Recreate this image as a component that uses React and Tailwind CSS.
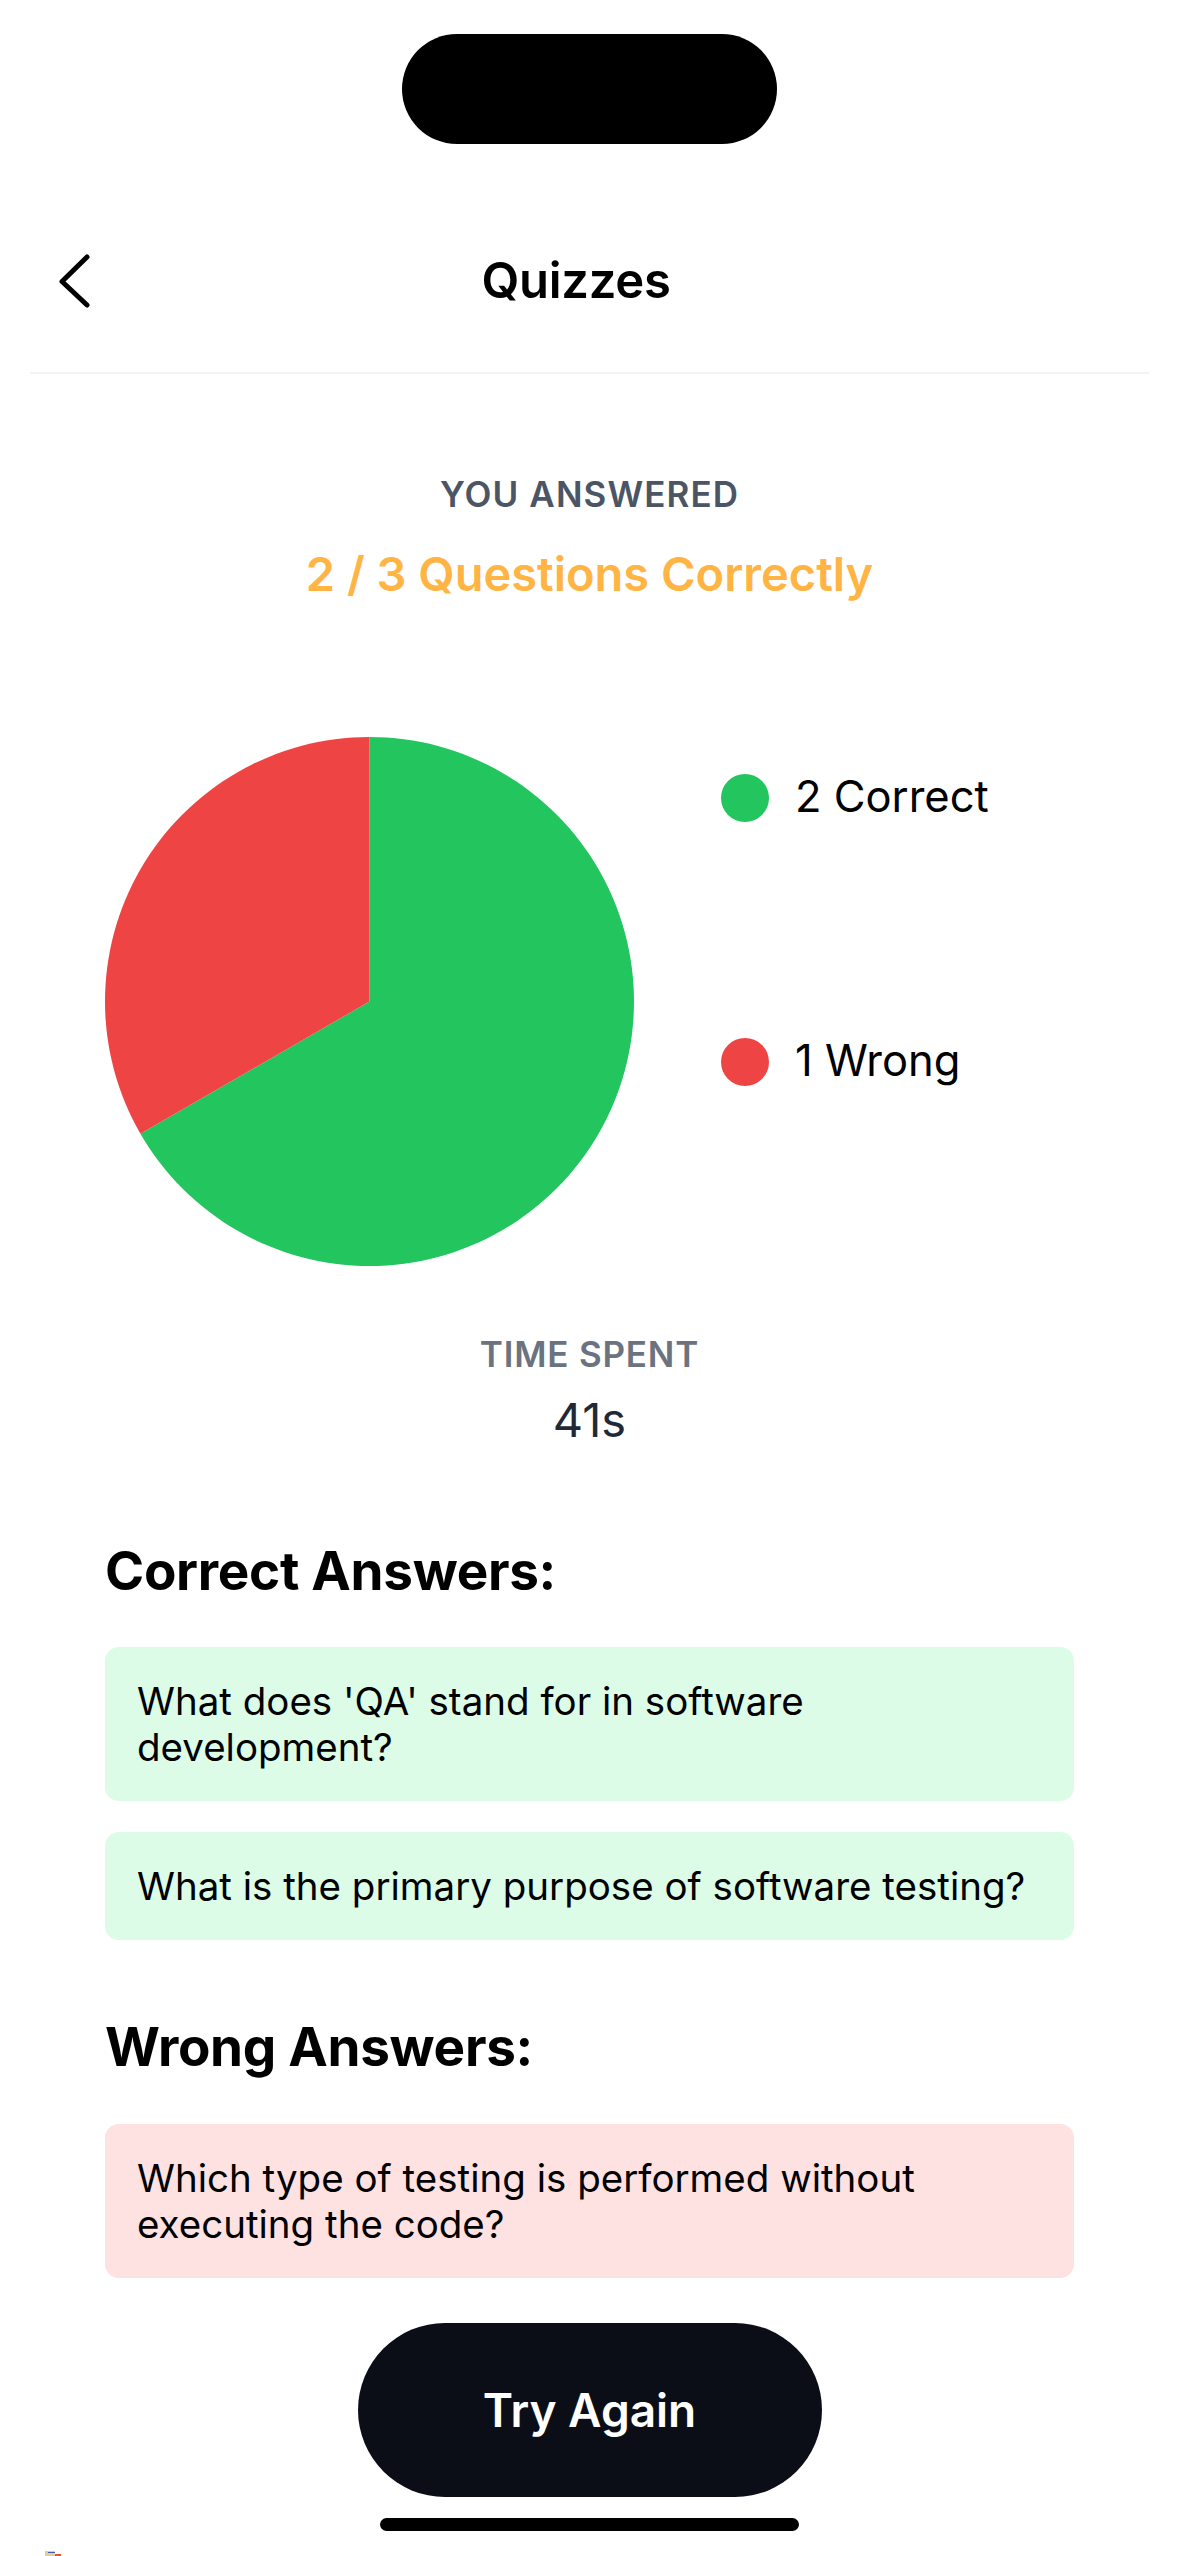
import React from "react";

function Pie() {
  return (
    <svg width="529" height="529" viewBox="0 0 200 200" className="shrink-0 block">
      <path d="M100,100 L100,0 A100,100 0 1 1 13.3975,150 Z" fill="#22c55e" />
      <path d="M100,100 L13.3975,150 A100,100 0 0 1 100,0 Z" fill="#ef4444" />
    </svg>
  );
}

function LegendItem({ color, label }) {
  return (
    <div className="flex items-center gap-[26px] h-[48px]">
      <div className={`w-[48px] h-[48px] rounded-full ${color}`} />
      <span className="text-[43.5px] leading-[44px] -mt-[4px] text-black">{label}</span>
    </div>
  );
}

export default function App() {
  return (
    <div
      className="relative w-[1179px] h-[2556px] bg-white overflow-hidden"
      style={{ fontFamily: "Inter, 'Noto Sans', sans-serif" }}
    >
      {/* status area */}
      <div className="pt-[34px]">
        <div className="mx-auto w-[375px] h-[110px] rounded-full bg-black" />
      </div>

      {/* header */}
      <div className="mt-[77px] h-[120px] flex items-center px-[58px]">
        <div className="w-[36px] h-[60px] flex items-center">
          <svg width="36" height="60" viewBox="0 0 36 60" fill="none">
            <path
              d="M29 6 L4 30.5 L29 54"
              stroke="#000"
              strokeWidth="5"
              strokeLinecap="round"
              strokeLinejoin="round"
            />
          </svg>
        </div>
        <div className="flex-1 text-center text-[49px] leading-[60px] font-semibold text-black tracking-[-0.3px]">
          Quizzes
        </div>
        <div className="w-[63px]" />
      </div>
      <div className="mt-[31px] mx-[30px] h-[2px] bg-[#f2f3f5]" />

      {/* content */}
      <div className="px-[105px]">
        <div className="mt-[98px] text-center text-[35px] leading-[44px] font-semibold tracking-[1.1px] text-[#4b5563]">
          YOU ANSWERED
        </div>
        <div className="mt-[30px] text-center text-[47px] leading-[56px] font-semibold text-[#ffb443]">
          2 / 3 Questions Correctly
        </div>

        {/* chart */}
        <div className="mt-[135px] flex items-start">
          <Pie />
          <div className="ml-[87px] pt-[37px] flex flex-col gap-[216px]">
            <LegendItem color="bg-[#22c55e]" label="2 Correct" />
            <LegendItem color="bg-[#ef4444]" label="1 Wrong" />
          </div>
        </div>

        <div className="mt-[66px] text-center text-[35px] leading-[44px] font-semibold tracking-[0.8px] text-[#6b7280]">
          TIME SPENT
        </div>
        <div className="mt-[16px] text-center text-[47px] leading-[56px] text-[#1f2937]">
          41s
        </div>

        <div className="mt-[91px] text-[53px] leading-[64px] font-bold text-black tracking-[-0.3px]">
          Correct Answers:
        </div>
        <div className="mt-[44px] flex flex-col gap-[31px]">
          <div className="rounded-[14px] bg-[#dcfce7] px-[32px] py-[31px] text-[38.5px] leading-[46px] text-black">
            What does 'QA' stand for in software development?
          </div>
          <div className="rounded-[14px] bg-[#dcfce7] px-[32px] py-[31px] text-[38.5px] leading-[46px] text-black">
            What is the primary purpose of software testing?
          </div>
        </div>

        <div className="mt-[75px] text-[53px] leading-[64px] font-bold text-black tracking-[-0.3px]">
          Wrong Answers:
        </div>
        <div className="mt-[45px] flex flex-col gap-[31px]">
          <div className="rounded-[14px] bg-[#fee2e2] px-[32px] py-[31px] text-[38.5px] leading-[46px] text-black">
            Which type of testing is performed without executing the code?
          </div>
        </div>

        <div className="mt-[45px] mx-auto w-[464px] h-[174px] rounded-full bg-[#0b0e17] flex items-center justify-center">
          <span className="text-[46px] font-semibold text-white">Try Again</span>
        </div>
      </div>

      {/* home indicator */}
      <div className="mt-[21px] mx-auto w-[419px] h-[13px] rounded-full bg-black" />

      {/* tiny corner artifact */}
      <div className="absolute left-[45px] bottom-0 w-[10px] h-[5px] bg-[#e2d08c]" />
      <div className="absolute left-[48px] bottom-[3px] w-[7px] h-[1px] bg-[#4a5aa8]" />
      <div className="absolute left-[55px] bottom-0 w-[6px] h-[2px] bg-[#e8503a]" />
    </div>
  );
}
